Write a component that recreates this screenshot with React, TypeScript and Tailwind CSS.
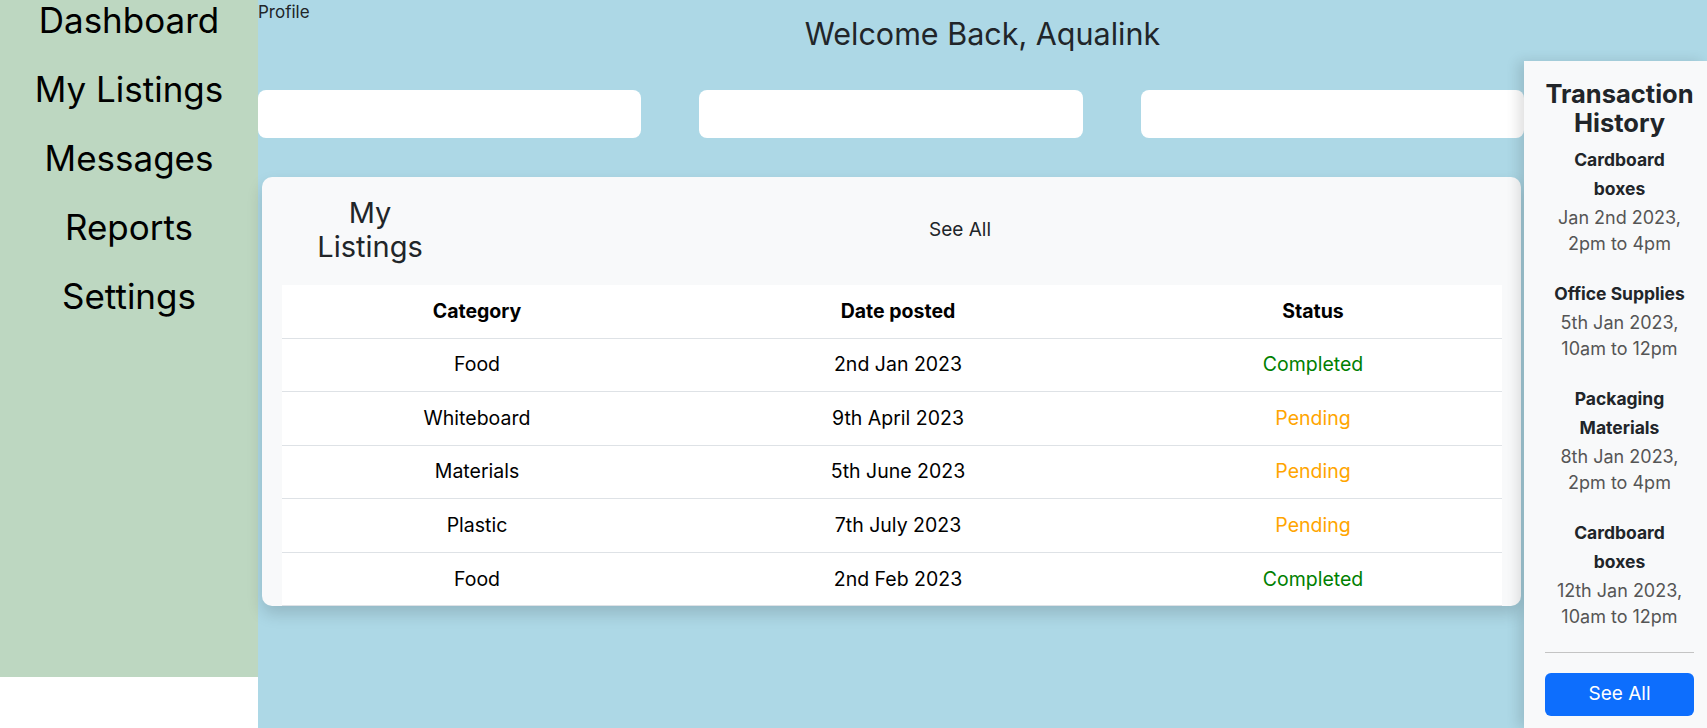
import React from 'react';

const navItems = ['Dashboard', 'My Listings', 'Messages', 'Reports', 'Settings'];

const listings = [
    { category: 'Food', date: '2nd Jan 2023', status: 'Completed' },
    { category: 'Whiteboard', date: '9th April 2023', status: 'Pending' },
    { category: 'Materials', date: '5th June 2023', status: 'Pending' },
    { category: 'Plastic', date: '7th July 2023', status: 'Pending' },
    { category: 'Food', date: '2nd Feb 2023', status: 'Completed' },
];

// lines are kept as in the original layout
const transactions = [
    { item: ['Cardboard', 'boxes'], when: ['Jan 2nd 2023,', '2pm to 4pm'] },
    { item: ['Office Supplies'], when: ['5th Jan 2023,', '10am to 12pm'] },
    { item: ['Packaging', 'Materials'], when: ['8th Jan 2023,', '2pm to 4pm'] },
    { item: ['Cardboard', 'boxes'], when: ['12th Jan 2023,', '10am to 12pm'] },
];

const Sidebar: React.FC = () => (
    <aside className="w-[258px] shrink-0 h-[677px] bg-[#bdd7c1]">
        <ul className="flex flex-col gap-[21px] -mt-[4px]">
            {navItems.map((label) => (
                <li key={label} className="text-center text-[35px] leading-[48px] text-black">
                    {label}
                </li>
            ))}
        </ul>
    </aside>
);

const ListingsCard: React.FC = () => (
    <div className="ml-[4px] mr-[3px] bg-[#f8f9fa] rounded-[10px] shadow-[0_8px_16px_rgba(0,0,0,0.15)] pt-[19px] px-[20px] pr-[19px]">
        <div className="flex items-center">
            <h3 className="w-[176px] px-[23px] text-center text-[29px] leading-[34px] text-[#212529]">My Listings</h3>
            <div className="w-[1004px] text-center text-[19px] text-[#212529]">See All</div>
        </div>
        <table className="mt-[21px] w-full table-fixed bg-white text-[19.5px] text-black">
            <colgroup>
                <col className="w-[390px]" />
                <col className="w-[452px]" />
                <col className="w-[378px]" />
            </colgroup>
            <thead>
                <tr className="h-[53px] border-b border-[#dee2e6] font-bold">
                    <th>Category</th>
                    <th>Date posted</th>
                    <th>Status</th>
                </tr>
            </thead>
            <tbody>
                {listings.map((row, i) => (
                    <tr key={i} className="h-[53.6px] border-b border-[#dee2e6] text-center">
                        <td>{row.category}</td>
                        <td>{row.date}</td>
                        <td className={row.status === 'Completed' ? 'text-[#008000]' : 'text-[#ffa500]'}>
                            {row.status}
                        </td>
                    </tr>
                ))}
            </tbody>
        </table>
    </div>
);

const TransactionPanel: React.FC = () => (
    <aside className="w-[183px] shrink-0 bg-[#f8f9fa] shadow-[-6px_0_12px_rgba(0,0,0,0.12)] pt-[18px] pl-[21px] pr-[13px] pb-[12px] text-center">
        <h4 className="-mx-[6px] text-[25.5px] leading-[29px] font-bold text-[#212529]">Transaction History</h4>
        <div className="mt-[8px]">
            {transactions.map((t, i) => (
                <div key={i} className="mb-[22px]">
                    {t.item.map((line) => (
                        <div key={line} className="whitespace-nowrap text-[17.5px] leading-[29px] font-bold text-[#212529]">{line}</div>
                    ))}
                    <div className="mt-[2px]">
                        {t.when.map((line) => (
                            <div key={line} className="whitespace-nowrap text-[18px] leading-[26px] text-[#555555]">{line}</div>
                        ))}
                    </div>
                </div>
            ))}
        </div>
        <hr className="mt-[3px] border-t border-[#c4c4c4]" />
        <button className="mt-[20px] w-full h-[43px] rounded-[6px] bg-[#0d6efd] text-white text-[19px]">
            See All
        </button>
    </aside>
);

export default function App() {
    return (
        <div className="flex min-h-[728px] bg-white font-['Inter','Liberation_Sans',sans-serif]">
            <Sidebar />
            <main className="flex-1 flex flex-col bg-[#add8e6] min-h-[728px]">
                <header className="grid grid-cols-[1fr_auto_1fr] h-[61px]">
                    <div className="text-[17px] leading-[24px] text-[#212529]">Profile</div>
                    <h1 className="pt-[16px] text-[30.5px] leading-[36px] text-[#212529]">Welcome Back, Aqualink</h1>
                    <div />
                </header>
                <div className="flex flex-1">
                    <section className="flex-1 pt-[29px]">
                        <div className="flex justify-between">
                            <div className="w-[383px] h-[48px] bg-white rounded-[8px]" />
                            <div className="w-[384px] h-[48px] bg-white rounded-[8px]" />
                            <div className="w-[383px] h-[48px] bg-white rounded-[8px]" />
                        </div>
                        <div className="mt-[39px]">
                            <ListingsCard />
                        </div>
                    </section>
                    <TransactionPanel />
                </div>
            </main>
        </div>
    );
}
